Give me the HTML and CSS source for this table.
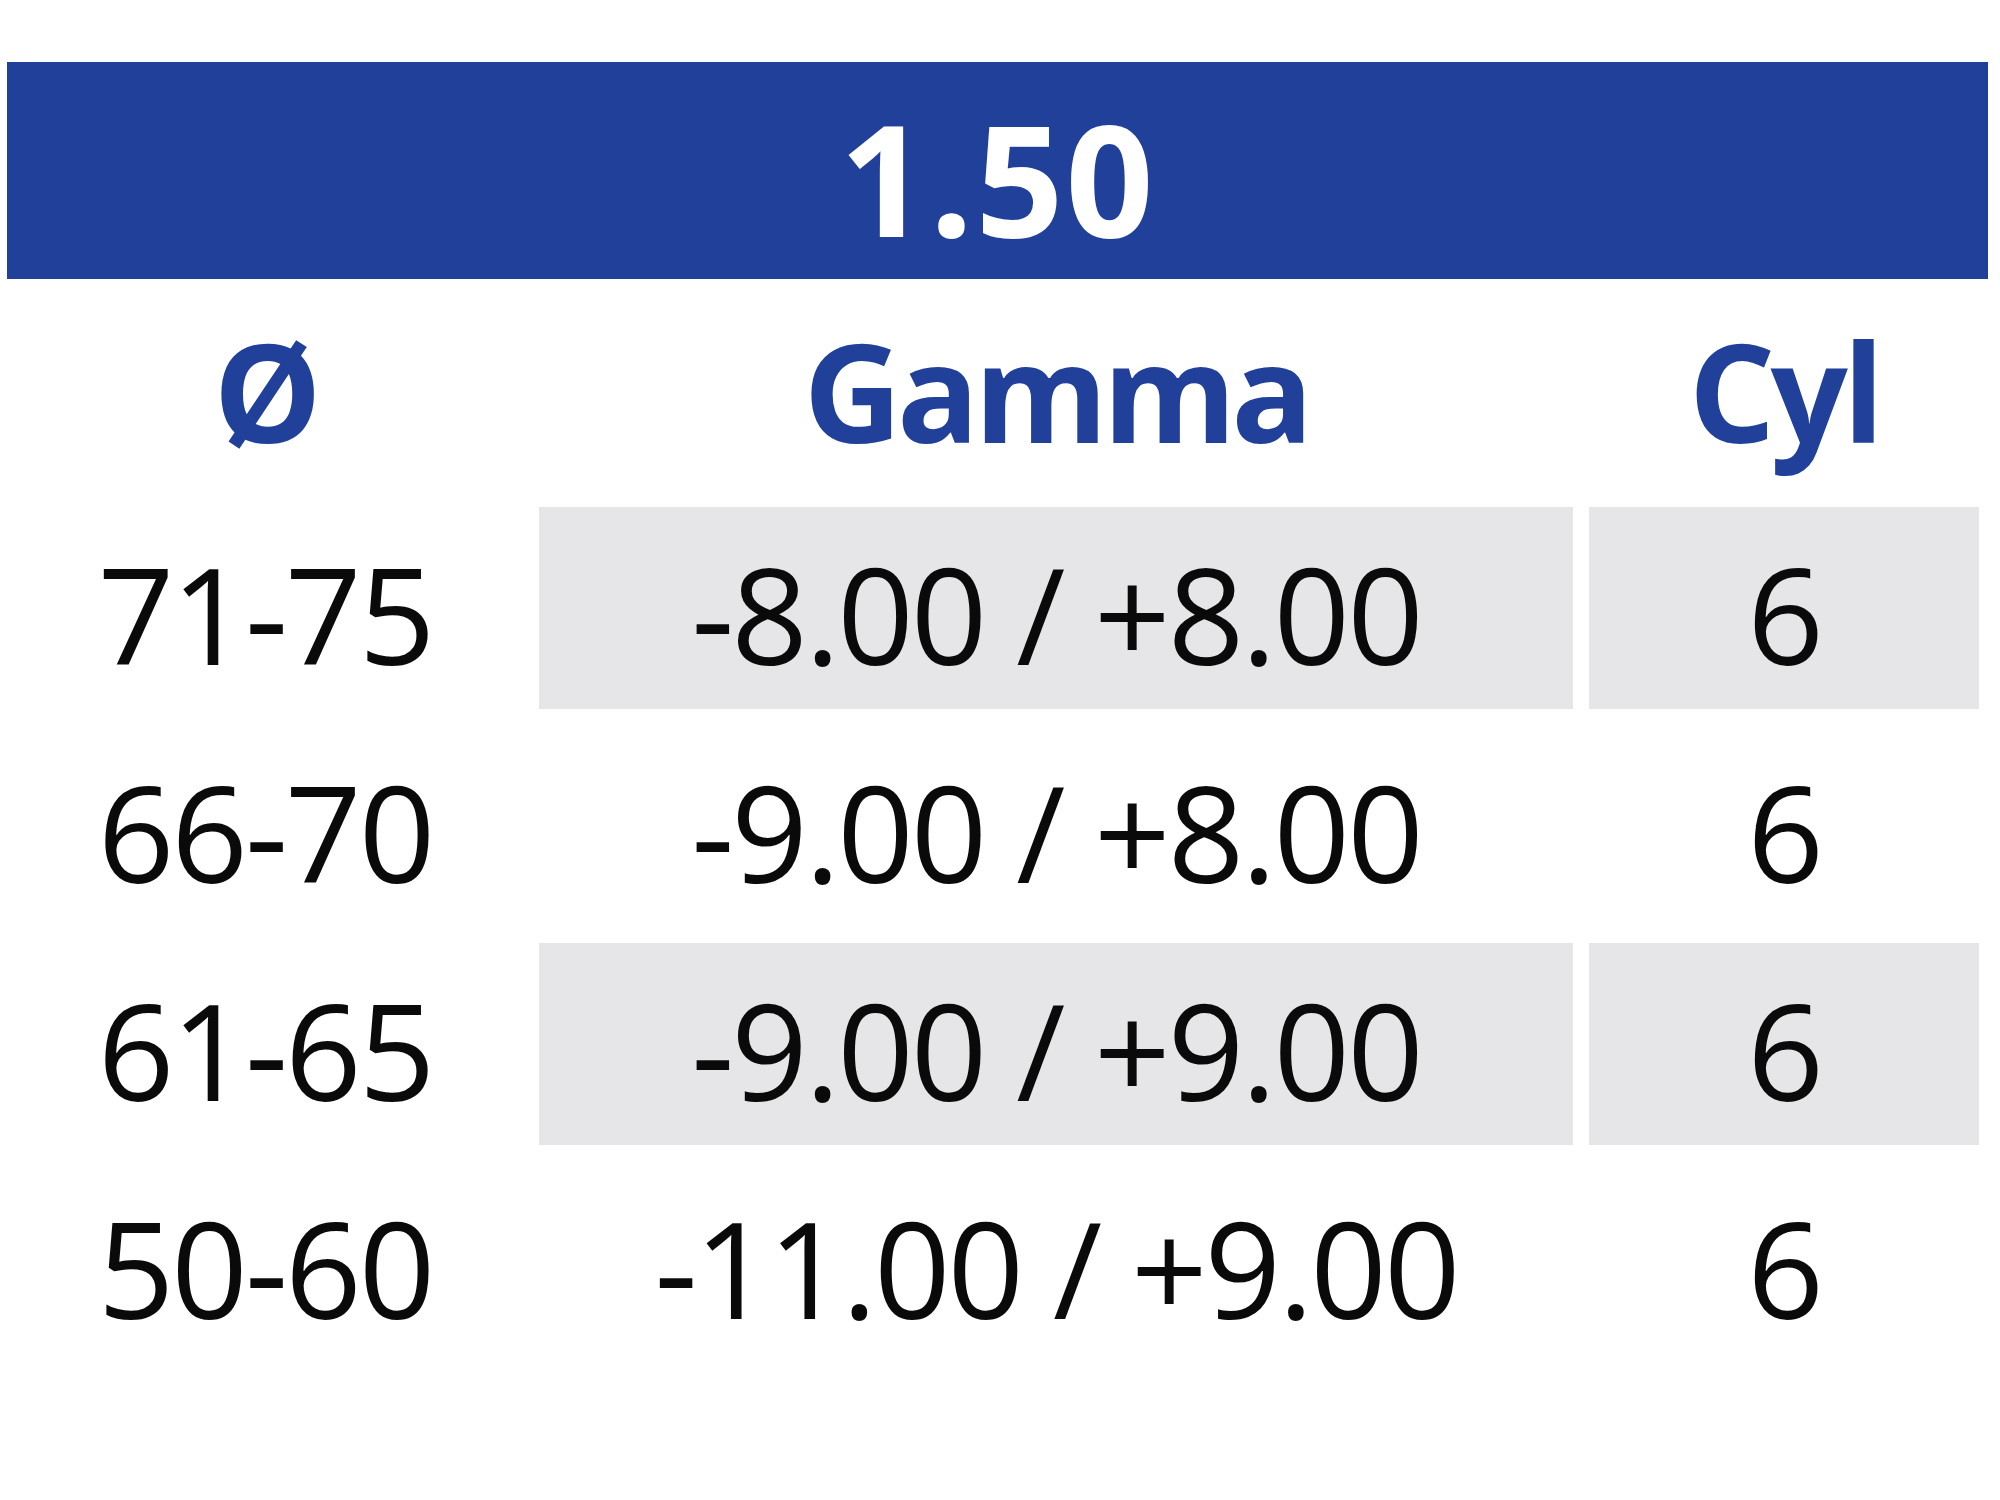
FILE: index.html
```html
<!DOCTYPE html>
<html lang="it">
<head>
<meta charset="utf-8">
<title>1.50</title>
<link rel="stylesheet" href="styles.css">
</head>
<body>
<div class="page">
  <div class="title-bar"><span class="title">1.50</span></div>
  <div class="grid">
    <div class="cell head">Ø</div>
    <div class="cell head">Gamma</div>
    <div class="cell head">Cyl</div>

    <div class="cell">71-75</div>
    <div class="cell shade">-8.00 / +8.00</div>
    <div class="cell shade">6</div>

    <div class="cell">66-70</div>
    <div class="cell">-9.00 / +8.00</div>
    <div class="cell">6</div>

    <div class="cell">61-65</div>
    <div class="cell shade">-9.00 / +9.00</div>
    <div class="cell shade">6</div>

    <div class="cell">50-60</div>
    <div class="cell">-11.00 / +9.00</div>
    <div class="cell">6</div>
  </div>
</div>
</body>
</html>
```

FILE: styles.css
```css
html, body {
  margin: 0;
  padding: 0;
  background: #ffffff;
}

.page {
  width: 2000px;
  height: 1500px;
  padding-top: 62px;
  box-sizing: border-box;
  font-family: "Open Sans", "Noto Sans", sans-serif;
}

.title-bar {
  margin-left: 7px;
  width: 1981px;
  height: 217px;
  background: #21409a;
  display: flex;
  align-items: center;
  justify-content: center;
}

.title {
  color: #ffffff;
  font-weight: 700;
  font-size: 154px;
  line-height: 1;
  letter-spacing: 2px;
  margin-left: 0;
  margin-top: 12px;
}

.grid {
  margin-left: 7px;
  margin-top: 12px;
  display: grid;
  grid-template-columns: 516px 1034px 390px;
  grid-template-rows: 200px repeat(4, 202px);
  column-gap: 16px;
  row-gap: 16px;
}

.cell {
  display: flex;
  align-items: center;
  justify-content: center;
  color: #0a0a0a;
  font-size: 134px;
  font-weight: 400;
  line-height: 1;
  letter-spacing: -3px;
  padding-top: 10px;
  box-sizing: border-box;
  white-space: nowrap;
}

.cell.head {
  color: #21409a;
  font-weight: 700;
  font-size: 136px;
  letter-spacing: -5px;
  padding-top: 0;
}

.cell.shade {
  background: #e6e6e8;
}
```
